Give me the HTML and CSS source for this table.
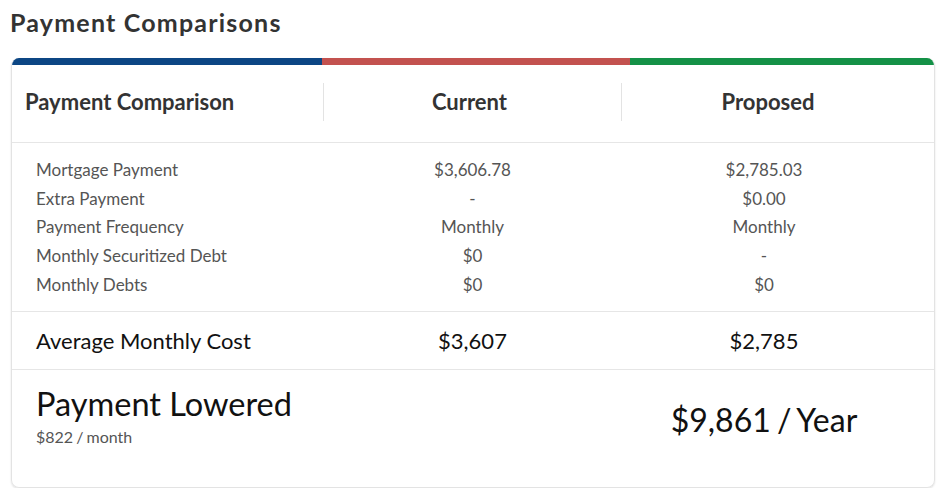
FILE: index.html
```html
<!DOCTYPE html>
<html>
<head>
<meta charset="utf-8">
<link rel="stylesheet" href="styles.css">
</head>
<body>
<h1 class="page-title">Payment Comparisons</h1>
<div class="card">
  <div class="topbar">
    <div class="seg seg-blue"></div>
    <div class="seg seg-red"></div>
    <div class="seg seg-green"></div>
  </div>
  <div class="head-row">
    <div class="head-cell head-label">Payment Comparison</div>
    <div class="head-cell head-current">Current</div>
    <div class="head-cell head-proposed">Proposed</div>
  </div>
  <div class="details">
    <div class="drow"><div class="dlabel">Mortgage Payment</div><div class="dval c2">$3,606.78</div><div class="dval c3">$2,785.03</div></div>
    <div class="drow"><div class="dlabel">Extra Payment</div><div class="dval c2">-</div><div class="dval c3">$0.00</div></div>
    <div class="drow"><div class="dlabel">Payment Frequency</div><div class="dval c2">Monthly</div><div class="dval c3">Monthly</div></div>
    <div class="drow"><div class="dlabel">Monthly Securitized Debt</div><div class="dval c2">$0</div><div class="dval c3">-</div></div>
    <div class="drow"><div class="dlabel">Monthly Debts</div><div class="dval c2">$0</div><div class="dval c3">$0</div></div>
  </div>
  <div class="avg-row">
    <div class="dlabel">Average Monthly Cost</div>
    <div class="dval c2">$3,607</div>
    <div class="dval c3">$2,785</div>
  </div>
  <div class="lowered-row">
    <div class="lowered-left">
      <div class="lowered-title">Payment Lowered</div>
      <div class="lowered-sub">$822 / month</div>
    </div>
    <div class="lowered-mid"></div>
    <div class="lowered-year">$9,861 / Year</div>
  </div>
</div>
</body>
</html>
```

FILE: styles.css
```css
* { box-sizing: border-box; }
body {
  margin: 0;
  padding: 0 10px;
  font-family: Lato, "Open Sans", sans-serif;
  background: #fff;
  color: #333;
}
.page-title {
  margin: 0;
  padding-top: 7px;
  font-size: 25px;
  font-weight: 700;
  letter-spacing: 1.2px;
  color: #333;
  line-height: 30px;
}
.card {
  margin: 21px 10px 0 1px;
  border: 1px solid #e3e3e3;
  border-top: none;
  border-radius: 8px;
  overflow: hidden;
  box-shadow: 0 1px 2px rgba(0,0,0,0.12);
  width: 924px;
}
.topbar {
  display: grid;
  grid-template-columns: 310px 308px 1fr;
  height: 7px;
}
.seg-blue { background: #0c4684; }
.seg-red { background: #c3524f; }
.seg-green { background: #149147; }

.head-row {
  display: grid;
  grid-template-columns: 311px 299px 1fr;
  height: 78px;
  align-items: center;
  padding-bottom: 4px;
  border-bottom: 1px solid #e6e6e6;
}
.head-cell {
  font-size: 22px;
  font-weight: 700;
  color: #333;
  line-height: 38px;
}
.head-label {
  padding-left: 13px;
}
.head-current {
  text-align: center;
  border-left: 1px solid #e3e3e3;
  border-right: 1px solid #e3e3e3;
  padding-right: 6px;
}
.head-proposed {
  text-align: center;
  padding-right: 20px;
}

.details {
  padding: 12px 0 13px;
  border-bottom: 1px solid #e6e6e6;
}
.drow, .avg-row {
  display: grid;
  grid-template-columns: 311px 299px 1fr;
  align-items: center;
}
.drow {
  height: 28.7px;
  font-size: 17px;
  color: #555;
}
.dlabel { padding-left: 24px; }
.dval { text-align: center; }
.c3 { padding-right: 28px; }

.avg-row {
  height: 58px;
  font-size: 22px;
  color: #111;
  border-bottom: 1px solid #e6e6e6;
}

.lowered-row {
  display: grid;
  grid-template-columns: 311px 299px 1fr;
  height: 117px;
  align-items: start;
}
.lowered-left {
  padding-left: 24px;
  padding-top: 14px;
}
.lowered-title {
  font-size: 32.5px;
  color: #111;
  line-height: 40px;
}
.lowered-sub {
  font-size: 16px;
  color: #555;
  line-height: 20px;
  margin-top: 3px;
  word-spacing: -1px;
}
.lowered-year {
  font-size: 32px;
  color: #111;
  text-align: center;
  padding-right: 28px;
  padding-top: 30px;
  line-height: 40px;
  word-spacing: -2px;
}
```
